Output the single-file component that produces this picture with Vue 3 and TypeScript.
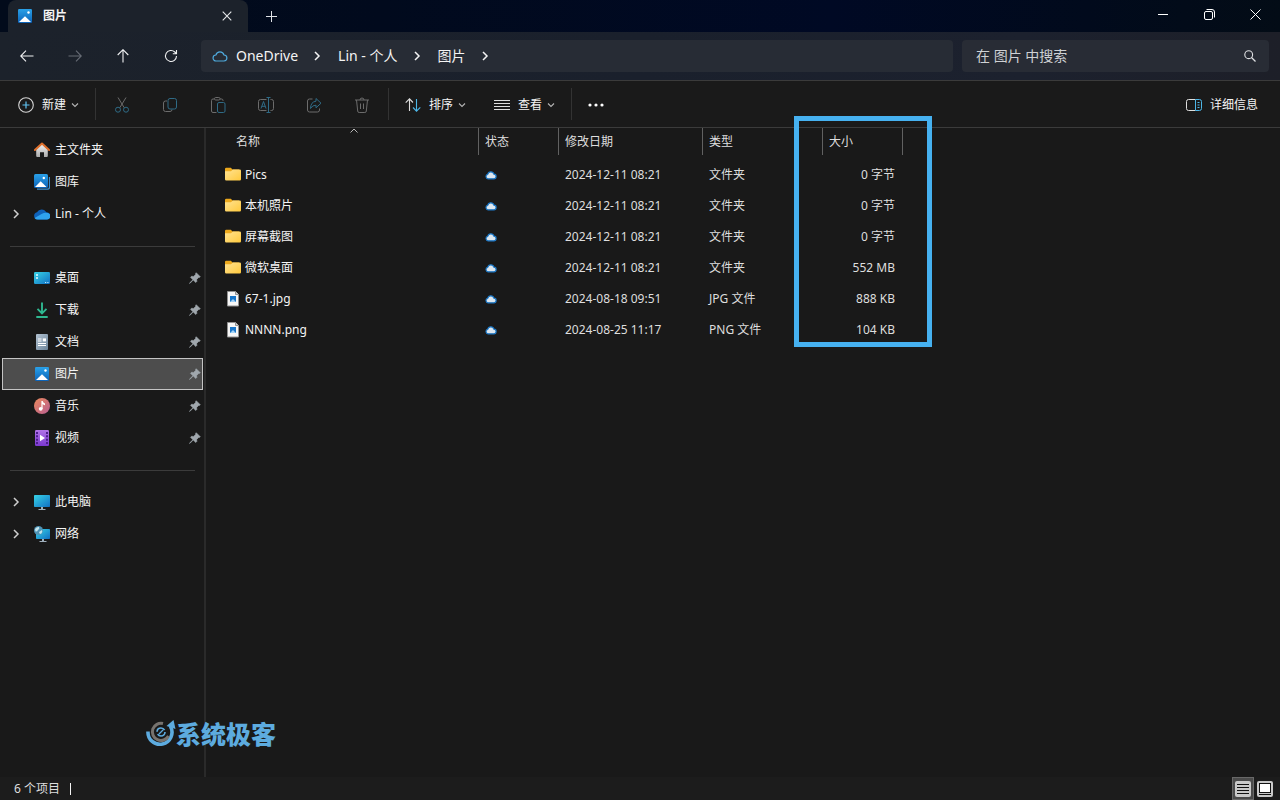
<script setup lang="ts">
import { ref } from 'vue'

interface NavItem {
  id: string
  label: string
  icon: string
  expandable?: boolean
  pinned?: boolean
}

interface FileRow {
  name: string
  icon: string
  modified: string
  type: string
  size: string
}

const selected = ref('pictures')
const search = ref('')

const navGroups: NavItem[][] = [
  [
    { id: 'home', label: '主文件夹', icon: 'i-home' },
    { id: 'gallery', label: '图库', icon: 'i-gallery' },
    { id: 'onedrive', label: 'Lin - 个人', icon: 'i-onedrive', expandable: true },
  ],
  [
    { id: 'desktop', label: '桌面', icon: 'i-desktop', pinned: true },
    { id: 'downloads', label: '下载', icon: 'i-download', pinned: true },
    { id: 'documents', label: '文档', icon: 'i-document', pinned: true },
    { id: 'pictures', label: '图片', icon: 'i-picture', pinned: true },
    { id: 'music', label: '音乐', icon: 'i-music', pinned: true },
    { id: 'videos', label: '视频', icon: 'i-video', pinned: true },
  ],
  [
    { id: 'pc', label: '此电脑', icon: 'i-pc', expandable: true },
    { id: 'network', label: '网络', icon: 'i-network', expandable: true },
  ],
]

const crumbs: string[] = ['OneDrive', 'Lin - 个人', '图片']

const fileActions = [
  { icon: 'i-cut', label: '剪切' },
  { icon: 'i-copy', label: '复制' },
  { icon: 'i-paste', label: '粘贴' },
  { icon: 'i-rename', label: '重命名' },
  { icon: 'i-share', label: '共享' },
  { icon: 'i-delete', label: '删除' },
]

const files: FileRow[] = [
  { name: 'Pics', icon: 'i-folder', modified: '2024-12-11 08:21', type: '文件夹', size: '0 字节' },
  { name: '本机照片', icon: 'i-folder', modified: '2024-12-11 08:21', type: '文件夹', size: '0 字节' },
  { name: '屏幕截图', icon: 'i-folder', modified: '2024-12-11 08:21', type: '文件夹', size: '0 字节' },
  { name: '微软桌面', icon: 'i-folder', modified: '2024-12-11 08:21', type: '文件夹', size: '552 MB' },
  { name: '67-1.jpg', icon: 'i-image', modified: '2024-08-18 09:51', type: 'JPG 文件', size: '888 KB' },
  { name: 'NNNN.png', icon: 'i-image', modified: '2024-08-25 11:17', type: 'PNG 文件', size: '104 KB' },
]
</script>

<template>
  <div class="explorer">
    <svg class="sprite" aria-hidden="true">
      <defs>
        <linearGradient id="g-pic" x1="0" y1="0" x2="0" y2="1">
          <stop offset="0" stop-color="#2aa1e8" /><stop offset="1" stop-color="#0b62b8" />
        </linearGradient>
        <linearGradient id="g-teal" x1="0" y1="0" x2="1" y2="1">
          <stop offset="0" stop-color="#37d3e6" /><stop offset="1" stop-color="#1170c4" />
        </linearGradient>
        <linearGradient id="g-music" x1="0" y1="0" x2="1" y2="1">
          <stop offset="0" stop-color="#ec8a5c" /><stop offset="1" stop-color="#b75d92" />
        </linearGradient>
        <linearGradient id="g-video" x1="0" y1="0" x2="0" y2="1">
          <stop offset="0" stop-color="#b173e8" /><stop offset="1" stop-color="#7b38cf" />
        </linearGradient>
        <linearGradient id="g-doc" x1="0" y1="0" x2="1" y2="1">
          <stop offset="0" stop-color="#b3c3d2" /><stop offset="1" stop-color="#6c8499" />
        </linearGradient>
        <linearGradient id="g-folder" x1="0" y1="0" x2="1" y2="1">
          <stop offset="0" stop-color="#ffe394" /><stop offset="1" stop-color="#ffc93c" />
        </linearGradient>
        <linearGradient id="g-house" x1="0" y1="0" x2="0" y2="1">
          <stop offset="0" stop-color="#f2f2f2" /><stop offset="1" stop-color="#aaaaaa" />
        </linearGradient>
        <linearGradient id="g-down" x1="0" y1="0" x2="0" y2="1" gradientUnits="userSpaceOnUse">
          <stop offset="0" stop-color="#40c997" /><stop offset="1" stop-color="#2bb08d" />
        </linearGradient>
      </defs>

      <symbol id="i-home" viewBox="0 0 16 16">
        <path d="M2.200 7.500 8 2.300l5.800 5.200v6.600a1 1 0 0 1-1 1H10V10.200H6v4.900H3.200a1 1 0 0 1-1-1z" fill="url(#g-house)" />
        <path d="M.9 8 8 1.500 15.100 8" fill="none" stroke="#e0702c" stroke-width="2" stroke-linecap="round" stroke-linejoin="round" />
      </symbol>
      <symbol id="i-gallery" viewBox="0 0 16 16">
        <path d="M3 15.200h10.500a2 2 0 0 0 2-2V3" fill="none" stroke="#3a8fd0" stroke-width="1.300" />
        <rect x="0" y="0" width="14" height="14" rx="1.500" fill="url(#g-pic)" />
        <path d="M1 13 6.700 7.300 12.500 13z" fill="#fff" />
        <circle cx="9.800" cy="4" r="1.200" fill="#fff" />
      </symbol>
      <symbol id="i-onedrive" viewBox="0 0 16 16">
        <path d="M3.700 13.500A3.700 3.700 0 0 1 3 6.200 5.200 5.200 0 0 1 12.300 6.300 3.600 3.600 0 0 1 12.500 13.500z" fill="#0f62ba" />
        <path d="M.6 12 8 7.800q3-1.800 5.800-.8a3.300 3.300 0 0 1-1 6.500H3.600Q1.600 13.500.6 12z" fill="#2fa3ef" />
      </symbol>
      <symbol id="i-desktop" viewBox="0 0 16 16">
        <rect x="0" y="2" width="16" height="12" rx="1.200" fill="url(#g-teal)" />
        <path d="M2 4.200h2v1.600H2zM2 7.200h2v1.600H2z" fill="#e8fbff" />
        <path d="M11 12.500h1.200M13.300 12.500h1.200" stroke="#bdeaff" stroke-width="1" />
      </symbol>
      <symbol id="i-download" viewBox="0 0 16 16">
        <path d="M8 .5v10.500M3.500 6.800 8 11.300l4.500-4.500M2.300 15h11.400" fill="none" stroke="#2fb790" stroke-width="1.900" />
      </symbol>
      <symbol id="i-document" viewBox="0 0 16 16">
        <rect x="2" y="0" width="12" height="16" rx="1" fill="url(#g-doc)" />
        <path d="M4 5h3.500M4 7h3.500M4 9.500h8M4 11.500h8" stroke="#fff" stroke-width="1.100" />
        <path d="M8.800 4.400H12v3H8.800z" fill="#fff" />
      </symbol>
      <symbol id="i-picture" viewBox="0 0 16 16">
        <rect x="1" y="1" width="14" height="14" rx="1.200" fill="url(#g-pic)" />
        <path d="M2 14 8 8.200 14 14z" fill="#fff" />
        <circle cx="11.500" cy="4.500" r="1.200" fill="#fff" />
      </symbol>
      <symbol id="i-music" viewBox="0 0 16 16">
        <circle cx="8" cy="8" r="8" fill="url(#g-music)" />
        <circle cx="6.700" cy="10.800" r="1.900" fill="#fff" />
        <path d="M7.400 3h1.300q.3 1.700 2.300 2.500v1.700Q9.500 7 8.600 6v5H7.400z" fill="#fff" />
      </symbol>
      <symbol id="i-video" viewBox="0 0 16 16">
        <rect x="1" y="0" width="14" height="16" rx="1.200" fill="url(#g-video)" />
        <path d="M2 2h2v2H2zM2 5.300h2v2H2zM2 8.700h2v2H2zM2 12h2v2H2zM12 2h2v2h-2zM12 5.300h2v2h-2zM12 8.700h2v2h-2zM12 12h2v2h-2z" fill="#4c1d8c" />
        <path d="M6 4.800 11 8l-5 3.200z" fill="#fff" />
      </symbol>
      <symbol id="i-pc" viewBox="0 0 16 16">
        <rect x="0" y="1" width="16" height="12" rx=".8" fill="url(#g-teal)" />
        <path d="M7 13h2v2H7zM4.500 15h7v1h-7z" fill="#9fb0bd" />
      </symbol>
      <symbol id="i-network" viewBox="0 0 16 16">
        <rect x="2" y="3" width="14" height="10" rx=".8" fill="url(#g-teal)" />
        <path d="M8 13h2v2H8zM5.500 15h7v1h-7z" fill="#9fb0bd" />
        <circle cx="4.500" cy="4.500" r="4.500" fill="#4f93b5" />
        <path d="M1 3q2-2.500 4-2 1 2-1 3-1 2-2.500 1.500zM5 6l3-2q1 2-1 4-2 0-2-2z" fill="#c4e5ee" />
      </symbol>
      <symbol id="i-folder" viewBox="0 0 16 16">
        <path d="M0 2a1.200 1.200 0 0 1 1.200-1.200h4.600L7.500 2.500H14V7H0z" fill="#eda91c" />
        <path d="M0 4.300h6L7.800 2.500h7a1.200 1.200 0 0 1 1.200 1.200v8.600a1.200 1.200 0 0 1-1.200 1.200H1.200A1.200 1.200 0 0 1 0 12.300z" fill="url(#g-folder)" />
      </symbol>
      <symbol id="i-image" viewBox="0 0 16 16">
        <path d="M2.500.5h8L13.500 3.500v11.500h-11z" fill="#f7f7f7" stroke="#929292" />
        <path d="M10.500.5v3h3" fill="#d0d0d0" stroke="#929292" />
        <rect x="5" y="5" width="6" height="6" fill="#1976c9" />
        <path d="M5 11 8 8l3 3z" fill="#a5d4f7" />
      </symbol>
      <symbol id="i-cloud" viewBox="0 0 12 10">
        <path d="M3 8.800a2.300 2.300 0 0 1-.3-4.500 3.200 3.200 0 0 1 6.200-.1 2.300 2.300 0 0 1-.2 4.600z" fill="#dce6ef" stroke="#1b79c9" stroke-width="1.200" />
      </symbol>
      <symbol id="i-pin" viewBox="0 0 12 12">
        <path d="M7.200.7 11.300 4.800l-1.100.7-.5-.1-2 2 .1 2.100-1 1L4.200 8 1 11.300H.6V11L3.900 7.800 1.500 5.300l1-1 2.100.1 2-2-.1-.6z" fill="#a0a7ad" stroke="#a0a7ad" stroke-width=".6" stroke-linejoin="round" />
      </symbol>
      <symbol id="i-chevron" viewBox="0 0 10 10">
        <path d="M3 1 7 5 3 9" fill="none" stroke="currentColor" stroke-width="1.500" />
      </symbol>
      <symbol id="i-down" viewBox="0 0 8 8">
        <path d="M1 2.500 4 5.500l3-3" fill="none" stroke="currentColor" stroke-width="1.100" />
      </symbol>

      <symbol id="i-cut" viewBox="0 0 16 16">
        <path d="M4 .5l6.200 10.200M12 .5 5.800 10.700" fill="none" stroke="#6c6c6c" />
        <g fill="none" stroke="#2f6b86"><circle cx="4" cy="12.700" r="2.500" /><circle cx="12" cy="12.700" r="2.500" /></g>
      </symbol>
      <symbol id="i-copy" viewBox="0 0 16 16">
        <path d="M5 4H3.500A2 2 0 0 0 1.500 6v6.500a2 2 0 0 0 2 2H8a2 2 0 0 0 2-2" fill="none" stroke="#6c6c6c" />
        <rect x="6" y="1.500" width="8.500" height="10.500" rx="2" fill="none" stroke="#2f6b86" />
      </symbol>
      <symbol id="i-paste" viewBox="0 0 16 16">
        <path d="M4.500 2H3a1.500 1.500 0 0 0-1.500 1.500v10.500A1.500 1.500 0 0 0 3 15.500h3.500M10 2h1.500A1.500 1.500 0 0 1 13 3.500V4" fill="none" stroke="#6c6c6c" />
        <rect x="4.500" y=".5" width="5.500" height="2.500" rx="1.200" fill="none" stroke="#6c6c6c" />
        <rect x="7.500" y="5.500" width="7.500" height="10" rx="1.500" fill="none" stroke="#2f6b86" />
      </symbol>
      <symbol id="i-rename" viewBox="0 0 16 16">
        <path d="M8.500 2.500H2.500a2 2 0 0 0-2 2v7a2 2 0 0 0 2 2h6M12.500 2.500h1a2 2 0 0 1 2 2v7a2 2 0 0 1-2 2h-1" fill="none" stroke="#6c6c6c" />
        <path d="M8.500.5h4M8.500 15.500h4M10.500.5v15M3 11.500 5.500 4.500 8 11.500M3.800 9.300h3.400" fill="none" stroke="#2f6b86" />
      </symbol>
      <symbol id="i-share" viewBox="0 0 16 16">
        <path d="M6.500 2H3.500a2 2 0 0 0-2 2v9a2 2 0 0 0 2 2h8a2 2 0 0 0 2-2v-1.500" fill="none" stroke="#6c6c6c" />
        <path d="M10 1.500 15 6.200 10 10.800V8.200Q6.500 8 4.500 11.500 4.700 4.800 10 4.200z" fill="none" stroke="#2f6b86" stroke-linejoin="round" />
      </symbol>
      <symbol id="i-delete" viewBox="0 0 16 16">
        <path d="M1 3h14M6 3a2 2 0 0 1 4 0M2.500 3l1.200 11a1.500 1.500 0 0 0 1.500 1.500h5.600A1.500 1.500 0 0 0 12.300 14L13.500 3M6.500 6.500v5.500M9.500 6.500v5.500" fill="none" stroke="#6c6c6c" />
      </symbol>
    </svg>

    <header class="titlebar">
      <div class="tab">
        <svg class="ic16"><use href="#i-picture" /></svg>
        <span class="tab-title">图片</span>
        <button class="plain tab-close" aria-label="关闭标签页">
          <svg width="10" height="10" viewBox="0 0 10 10"><path d="M.7.700l8.600 8.600M9.300.700.700 9.300" stroke="#e6e8ea" stroke-width="1.100" /></svg>
        </button>
      </div>
      <button class="plain new-tab" aria-label="新建标签页">
        <svg width="11" height="11" viewBox="0 0 11 11"><path d="M0 5.500h11M5.500 0v11" stroke="#dfe2e6" /></svg>
      </button>
      <div class="window-buttons">
        <button class="plain" aria-label="最小化">
          <svg width="10" height="10" viewBox="0 0 10 10"><path d="M0 5.500h10" stroke="#fff" /></svg>
        </button>
        <button class="plain" aria-label="还原">
          <svg width="11" height="11" viewBox="0 0 11 11" fill="none" stroke="#fff">
            <rect x=".5" y="2.500" width="8" height="8" rx="1.500" /><path d="M2.500.5H8A2.500 2.500 0 0 1 10.500 3v5.500" />
          </svg>
        </button>
        <button class="plain" aria-label="关闭">
          <svg width="11" height="11" viewBox="0 0 11 11"><path d="M.5.500l10 10M10.500.500l-10 10" stroke="#fff" /></svg>
        </button>
      </div>
    </header>

    <nav class="navbar" aria-label="导航">
      <div class="nav-buttons">
        <button class="plain" aria-label="后退">
          <svg width="14" height="12" viewBox="0 0 14 12"><path d="M13.500 6H1M6 .7.700 6 6 11.300" fill="none" stroke="#f0f1f2" stroke-width="1.100" /></svg>
        </button>
        <button class="plain" aria-label="前进" disabled>
          <svg width="14" height="12" viewBox="0 0 14 12"><path d="M.5 6H13M8 .7 13.300 6 8 11.300" fill="none" stroke="#676c75" stroke-width="1.100" /></svg>
        </button>
        <button class="plain" aria-label="向上">
          <svg width="12" height="14" viewBox="0 0 12 14"><path d="M6 13.500V1M.7 6 6 .7 11.300 6" fill="none" stroke="#f0f1f2" stroke-width="1.100" /></svg>
        </button>
        <button class="plain" aria-label="刷新">
          <svg width="14" height="14" viewBox="0 0 14 14"><path d="M12.500 7A5.500 5.500 0 1 1 10.800 3L12.300 4.500M12.500 1v3.700H8.800" fill="none" stroke="#f0f1f2" stroke-width="1.100" /></svg>
        </button>
      </div>
      <div class="address">
        <svg class="address-cloud" width="16" height="12" viewBox="0 0 16 12">
          <path d="M4.200 11A3 3 0 0 1 3.900 5 4.200 4.200 0 0 1 12 5a3 3 0 0 1-.2 6z" fill="none" stroke="#4fa9dc" stroke-width="1.200" />
        </svg>
        <template v-for="crumb in crumbs" :key="crumb">
          <a class="crumb" href="#">{{ crumb }}</a>
          <svg class="crumb-arrow" width="10" height="10"><use href="#i-chevron" /></svg>
        </template>
      </div>
      <form class="search" @submit.prevent>
        <input v-model="search" type="text" placeholder="在 图片 中搜索" aria-label="在 图片 中搜索" />
        <button class="plain search-button" aria-label="搜索">
          <svg width="12" height="12" viewBox="0 0 12 12"><circle cx="4.700" cy="4.700" r="3.900" fill="none" stroke="#e0e2e4" stroke-width="1.100" /><path d="M7.500 7.500l4 4" stroke="#e0e2e4" stroke-width="1.300" /></svg>
        </button>
      </form>
    </nav>

    <div class="toolbar" role="toolbar" aria-label="命令">
      <button class="plain command command-new">
        <svg class="ic16" viewBox="0 0 16 16"><circle cx="8" cy="8" r="7.300" fill="none" stroke="#d6d6d6" stroke-width="1.100" /><path d="M4.500 8h7M8 4.500v7" stroke="#5fc2f2" stroke-width="1.200" /></svg>
        <span>新建</span>
        <svg class="caret"><use href="#i-down" /></svg>
      </button>
      <div class="file-actions">
        <button v-for="action in fileActions" :key="action.icon" class="plain" :aria-label="action.label" disabled>
          <svg class="ic16"><use :href="'#' + action.icon" /></svg>
        </button>
      </div>
      <button class="plain command command-sort">
        <svg class="ic16" viewBox="0 0 16 16" fill="none"><path d="M4.500 14V2M.7 5.700 4.500 1.900 8 5.500" stroke="#dedede" stroke-width="1.100" /><path d="M11.500 2v12M8 10.500l3.500 3.600 3.800-3.800" stroke="#4db7e8" stroke-width="1.100" /></svg>
        <span>排序</span>
        <svg class="caret"><use href="#i-down" /></svg>
      </button>
      <button class="plain command command-view">
        <svg class="ic16" viewBox="0 0 16 16"><path d="M0 3.500h16M0 6.500h16M0 9.500h16M0 12.500h16" stroke="#dedede" /></svg>
        <span>查看</span>
        <svg class="caret"><use href="#i-down" /></svg>
      </button>
      <button class="plain more" aria-label="查看更多">
        <svg width="16" height="4" viewBox="0 0 16 4" fill="#fff"><circle cx="2" cy="2" r="1.600" /><circle cx="8" cy="2" r="1.600" /><circle cx="14" cy="2" r="1.600" /></svg>
      </button>
      <button class="plain command details">
        <svg class="ic16" viewBox="0 0 16 16" fill="none"><path d="M9.500 2.500h-7a2 2 0 0 0-2 2v7a2 2 0 0 0 2 2h7" stroke="#dedede" /><path d="M9.500 2.500h4a2 2 0 0 1 2 2v7a2 2 0 0 1-2 2h-4zM11.500 5.500h2M11.500 8h2M11.500 10.500h2" stroke="#4db7e8" /></svg>
        <span>详细信息</span>
      </button>
    </div>

    <div class="content">
      <aside class="sidebar">
        <ul v-for="(group, index) in navGroups" :key="index" class="nav-group">
          <li v-for="item in group" :key="item.id">
            <a href="#" class="nav-item" :class="{ active: item.id === selected }" @click.prevent="selected = item.id">
              <span class="expander"><svg v-if="item.expandable" width="10" height="10"><use href="#i-chevron" /></svg></span>
              <svg class="ic16 nav-icon"><use :href="'#' + item.icon" /></svg>
              <span class="nav-label">{{ item.label }}</span>
              <svg v-if="item.pinned" class="pin"><use href="#i-pin" /></svg>
            </a>
          </li>
        </ul>
      </aside>

      <main class="list">
        <table>
          <colgroup>
            <col class="c-name" /><col class="c-state" /><col class="c-date" /><col class="c-type" /><col class="c-size" />
          </colgroup>
          <thead>
            <tr>
              <th class="th-name" aria-sort="ascending">
                <button class="plain column-button">
                  名称
                  <svg class="sort-mark" width="8" height="5" viewBox="0 0 8 5"><path d="M.5 4.500 4 1l3.500 3.500" fill="none" stroke="#b8b8b8" /></svg>
                </button>
              </th>
              <th><button class="plain column-button">状态</button></th>
              <th><button class="plain column-button">修改日期</button></th>
              <th><button class="plain column-button">类型</button></th>
              <th><button class="plain column-button">大小</button></th>
            </tr>
          </thead>
          <tbody>
            <tr v-for="file in files" :key="file.name">
              <td class="td-name">
                <div class="file"><svg class="ic16"><use :href="'#' + file.icon" /></svg><span>{{ file.name }}</span></div>
              </td>
              <td><svg class="state" role="img" aria-label="联机时可用"><use href="#i-cloud" /></svg></td>
              <td>{{ file.modified }}</td>
              <td>{{ file.type }}</td>
              <td class="td-size">{{ file.size }}</td>
            </tr>
          </tbody>
        </table>
        <div class="highlight"></div>
      </main>

      <div class="watermark">
        <svg width="30" height="28" viewBox="0 0 30 28" fill="none">
          <path d="M2 12.500A12 12 0 1 0 24.500 7.500" stroke="#5dabdf" stroke-width="3.600" />
          <path d="M20.500 7 27.500 1 29.500 10z" fill="#5dabdf" />
          <path d="M17 4.500A8.600 8.600 0 1 0 22.500 17" stroke="#77736f" stroke-width="3" />
          <circle cx="15" cy="13" r="4" stroke="#5dabdf" stroke-width="1.700" stroke-dasharray="10 2.560" />
          <path d="M13 15l4-4" stroke="#5dabdf" stroke-width="1.300" />
        </svg>
        <span>系统极客</span>
      </div>
    </div>

    <footer class="statusbar">
      <span class="count">6 个项目</span>
      <span class="divider"></span>
      <div class="view-modes">
        <button class="plain mode mode-on" aria-label="详细信息视图">
          <svg class="ic16" viewBox="0 0 16 16"><rect width="16" height="16" rx="2" fill="#c9c9c9" /><path d="M2 3.500h12M2 6.500h12M2 9.500h12M2 12.500h12" stroke="#111" /></svg>
        </button>
        <button class="plain mode" aria-label="大缩略图视图">
          <svg class="ic16" viewBox="0 0 16 16"><rect width="16" height="16" rx="2" fill="#c9c9c9" /><rect x="2.500" y="2.500" width="11" height="9" fill="#fff" stroke="#111" /><path d="M2 13.500h12" stroke="#111" /></svg>
        </button>
      </div>
    </footer>
  </div>
</template>

<style>
body {
  background: #191919;
}
</style>

<style scoped>
.explorer {
  display: flex;
  flex-direction: column;
  min-height: 100vh;
  box-sizing: border-box;
  background: #191919;
  color: #f4f4f4;
  font-family: "Noto Sans", "Noto Sans CJK SC", sans-serif;
  font-size: 12px;
  line-height: 16px;
}
.sprite {
  position: absolute;
  width: 0;
  height: 0;
}
svg {
  display: block;
  flex: none;
}
.ic16 {
  width: 16px;
  height: 16px;
}
.plain {
  display: flex;
  align-items: center;
  justify-content: center;
  margin: 0;
  padding: 0;
  border: 0;
  background: none;
  color: inherit;
  font: inherit;
}
a {
  color: inherit;
  text-decoration: none;
}

.titlebar {
  display: flex;
  height: 32px;
  padding: 0 2px 0 8px;
  background: linear-gradient(90deg, #020b1b, #010a1d 30%, #000924 65%, #010a1c 85%, #030c16);
}
.tab {
  display: flex;
  align-items: center;
  width: 240px;
  box-sizing: border-box;
  padding: 0 9px;
  border-radius: 8px 8px 0 0;
  background: #1c222b;
}
.tab-title {
  flex: 1;
  margin-left: 10px;
  font-weight: 700;
}
.tab-close {
  width: 24px;
  height: 24px;
}
.new-tab {
  width: 46px;
}
.window-buttons {
  display: flex;
  margin-left: auto;
  height: 28px;
}
.window-buttons button {
  width: 46px;
}

.navbar {
  display: flex;
  align-items: center;
  height: 48px;
  padding-right: 11px;
  border-bottom: 1px solid #3b3b3b;
  background: linear-gradient(90deg, #1c222b, #1a202c 50%, #1c212e 80%, #1d1f28);
}
.nav-buttons {
  display: flex;
  padding: 0 6px 0 3px;
}
.nav-buttons button {
  width: 48px;
  height: 32px;
}
.address {
  display: flex;
  flex: 1;
  align-items: center;
  height: 32px;
  box-sizing: border-box;
  padding-left: 11px;
  border-radius: 4px;
  background: #272c35;
  font-size: 14px;
  line-height: 20px;
}
.crumb {
  margin-left: 8px;
}
.crumb-arrow {
  margin: 0 8px 0 14px;
}
.search {
  display: flex;
  width: 307px;
  height: 32px;
  margin-left: 9px;
  border-radius: 4px;
  background: #282c35;
}
.search input {
  flex: 1;
  min-width: 0;
  padding: 0 0 0 14px;
  border: 0;
  outline: 0;
  background: none;
  color: #f4f4f4;
  font: inherit;
  font-size: 14px;
}
.search input::placeholder {
  color: #cfd1d4;
  opacity: 1;
}
.search-button {
  width: 38px;
}

.toolbar {
  display: flex;
  align-items: center;
  height: 46px;
  box-sizing: content-box;
  padding: 0 22px 0 18px;
  border-bottom: 1px solid #3b3b3b;
  background: #1a1a1a;
}
.command {
  padding-top: 2px;
}
.command span {
  margin-left: 8px;
}
.caret {
  width: 8px;
  height: 8px;
  margin-left: 5px;
  color: #b5b5b5;
}
.file-actions {
  display: flex;
  margin-left: 16px;
  padding: 0 2px;
  border: solid #333;
  border-width: 0 1px;
}
.file-actions button {
  width: 48px;
  height: 32px;
  padding-top: 2px;
  box-sizing: border-box;
}
.command-sort {
  margin-left: 16px;
}
.command-view {
  margin-left: 28px;
}
.more {
  width: 49px;
  height: 32px;
  box-sizing: border-box;
  margin-left: 16px;
  padding-top: 2px;
  border-left: 1px solid #333;
}
.details {
  margin-left: auto;
}

.content {
  position: relative;
  display: flex;
  flex: 1;
}
.sidebar {
  width: 206px;
  box-sizing: border-box;
  padding-top: 6px;
  border-right: 2px solid #2a2a2a;
}
.nav-group {
  margin: 0;
  padding: 0;
  list-style: none;
}
.nav-group + .nav-group::before {
  content: "";
  display: block;
  height: 1px;
  margin: 16px 9px 15px 10px;
  background: #3b3b3b;
}
.nav-item {
  display: flex;
  align-items: center;
  height: 32px;
  box-sizing: border-box;
  margin: 0 1px 0 2px;
  padding: 0 1px 0 5px;
  border: 1px solid transparent;
}
.nav-item.active {
  border-color: #c4c4c4;
  background: #4d4d4d;
}
.expander {
  display: flex;
  justify-content: center;
  width: 16px;
  color: #cfcfcf;
}
.nav-icon {
  margin-left: 10px;
}
.nav-label {
  flex: 1;
  margin-left: 5px;
}
.pin {
  width: 12px;
  height: 12px;
}

.list {
  position: relative;
  flex: 1;
  min-width: 0;
}
table {
  width: 697px;
  border-collapse: separate;
  border-spacing: 0;
  table-layout: fixed;
}
.c-name {
  width: 273px;
}
.c-state,
.c-size {
  width: 80px;
}
.c-date {
  width: 144px;
}
.c-type {
  width: 120px;
}
th {
  height: 31px;
  padding: 0;
  font-weight: 400;
  vertical-align: top;
}
.column-button {
  position: relative;
  justify-content: flex-start;
  width: 100%;
  height: 27px;
  padding: 1px 0 0 6px;
  box-sizing: border-box;
  border-right: 1px solid #616161;
  color: #dedede;
}
.th-name {
  padding-left: 24px;
}
.sort-mark {
  position: absolute;
  top: 0;
  left: 50%;
  margin-left: -4px;
}
td {
  height: 31px;
  padding: 0 0 0 6px;
  color: #dedede;
}
.td-name {
  padding-left: 19px;
  color: #f4f4f4;
}
.file {
  display: flex;
  align-items: center;
  gap: 4px;
}
.td-size {
  padding-right: 8px;
  text-align: right;
}
.state {
  width: 12px;
  height: 10px;
}
.highlight {
  position: absolute;
  top: -12px;
  left: 588px;
  width: 138px;
  height: 231px;
  box-sizing: border-box;
  border: 5px solid #46b1f0;
}
.watermark {
  position: absolute;
  bottom: 28px;
  left: 146px;
  display: flex;
  align-items: center;
  color: #5dabdf;
  font-family: "Noto Sans CJK SC", sans-serif;
  font-size: 25px;
  font-weight: 900;
  line-height: 32px;
}

.statusbar {
  display: flex;
  align-items: center;
  height: 23px;
  padding: 0 4px 0 14px;
  background: #1c1c1c;
  color: #dedede;
}
.divider {
  width: 1px;
  height: 12px;
  margin-left: 10px;
  background: #f4f4f4;
}
.view-modes {
  display: flex;
  margin-left: auto;
}
.mode {
  width: 22px;
  height: 23px;
  box-sizing: border-box;
}
.mode-on {
  border: 1px solid #686868;
  background: #4a4a4a;
}
</style>
